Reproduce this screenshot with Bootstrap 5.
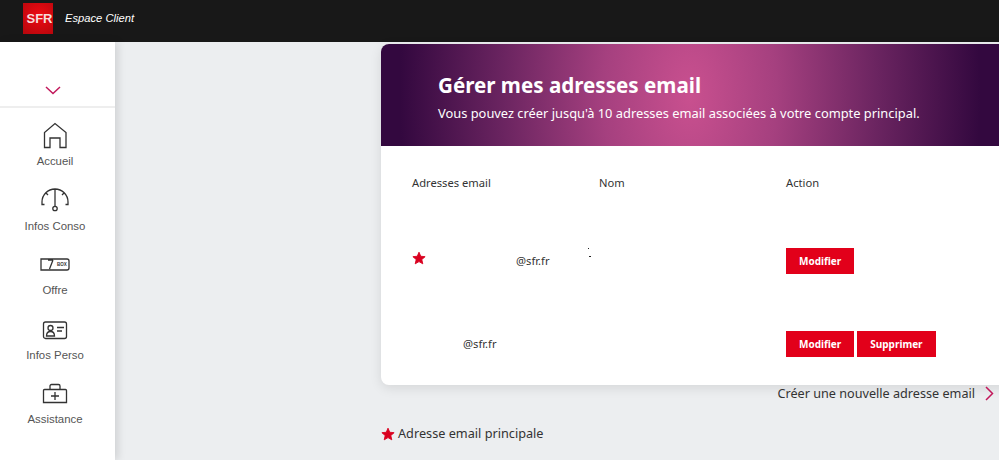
<!DOCTYPE html>
<html lang="fr">
  <head>
    <meta charset="UTF-8" />
    <title>Espace Client</title>
    <link href="https://cdn.jsdelivr.net/npm/bootstrap@5.3.0/dist/css/bootstrap.min.css" rel="stylesheet" />
    <style>
      body {
        background: #eceef0;
        height: 460px;
        overflow: hidden;
        font-family: "Noto Sans", "Liberation Sans", sans-serif;
        color: #333;
      }
      .top-bar {
        height: 42px;
        background: #181818;
        padding: 0 0 6px 23px;
      }
      .sfr-logo {
        width: 30px;
        height: 31px;
        padding-left: 3px;
        background: radial-gradient(circle at 55% 40%, #ee0a12, #b4060c);
        color: #f6dcdc;
        font: bold 13px "Liberation Sans", sans-serif;
      }
      .top-title {
        margin-left: 12px;
        font: italic 11.2px "Liberation Sans", sans-serif;
      }
      .page-body {
        height: 418px;
      }
      .side-menu {
        width: 115px;
        flex: none;
        box-shadow: 3px 0 8px rgba(0, 0, 0, 0.12);
        font: 11.4px/18px "Liberation Sans", sans-serif;
        color: #555;
      }
      .side-toggle {
        height: 66px;
        padding: 44px 9px 0 0;
        border-bottom: 2px solid #eee;
      }
      .side-list {
        padding-top: 14px;
      }
      .side-item {
        height: 64.5px;
        padding-right: 5px;
        color: #555;
        text-decoration: none;
      }
      .side-icon {
        height: 30px;
      }
      .side-icon svg {
        display: block;
      }
      .main-area {
        padding: 2px 0 0 266px;
        min-width: 0;
        flex: 1;
      }
      .mail-card {
        width: 660px;
        height: 341px;
        border-radius: 8px;
        overflow: hidden;
        box-shadow: 0 3px 12px rgba(0, 0, 0, 0.1);
      }
      .mail-hero {
        height: 102px;
        padding: 28px 0 0 57px;
        background: radial-gradient(ellipse 290px 500px at 309px 50%, #c9508f 0%, #a5407f 30%, #6a2460 65%, #33083f 100%);
      }
      .mail-hero h1 {
        font-size: 20.6px;
        font-weight: 700;
        line-height: 27px;
        margin: 0;
      }
      .mail-hero p {
        font-size: 12.87px;
        line-height: 18px;
        margin: 5px 0 0;
      }
      .mail-table {
        margin: 0;
        font-size: 11.2px;
        width: 100%;
        table-layout: fixed;
        --bs-table-color: #333;
      }
      .mail-table th,
      .mail-table td {
        padding: 0;
        font-weight: 400;
        vertical-align: middle;
        background: transparent;
      }
      .mail-table th:first-child,
      .mail-table td:first-child {
        padding-left: 31px;
        width: 218px;
      }
      .mail-table th:nth-child(2) {
        width: 187px;
      }
      .row-head {
        height: 75px;
      }
      .row-main {
        height: 80px;
      }
      .row-other {
        height: 86px;
      }
      .mail-star {
        width: 14px;
        height: 14px;
        fill: #d9001f;
        stroke: #d9001f;
        stroke-width: 1.5;
        stroke-linejoin: round;
        flex: none;
      }
      .star-main {
        margin-bottom: 6px;
      }
      .mail-first {
        width: 90px;
      }
      .mail-specks {
        width: 4px;
        height: 10px;
        margin: 0 8px 16px auto;
      }
      .mail-second {
        padding-left: 51px;
      }
      .btn-sfr {
        background: #e2001a;
        color: #fff;
        border: 0;
        border-radius: 0;
        font-size: 10px;
        font-weight: 700;
        height: 26px;
        line-height: 26px;
        padding: 0 13px;
      }
      .btn-gap {
        gap: 3px;
      }
      .create-row {
        width: 613px;
        height: 17px;
        font-size: 12.65px;
      }
      .create-row svg {
        margin-left: 10px;
      }
      .legend-row {
        margin-top: 22px;
        gap: 3px;
        font-size: 12.7px;
      }
    </style>
  </head>
  <body>
    <header class="top-bar d-flex align-items-center text-white">
      <div class="sfr-logo d-flex align-items-center justify-content-center">SFR</div>
      <div class="top-title">Espace Client</div>
    </header>

    <div class="page-body d-flex">
      <nav class="side-menu bg-white">
        <div class="side-toggle d-flex justify-content-center align-items-start">
          <svg width="16" height="9" viewBox="0 0 16 9" fill="none" stroke="#c2185b" stroke-width="1.5"><path d="M1 1l7 6.500L15 1" /></svg>
        </div>
        <div class="side-list">
          <a class="side-item d-flex flex-column align-items-center" href="#">
            <div class="side-icon">
              <svg width="26" height="27" viewBox="0 0 26 27" fill="none" stroke="#333" stroke-width="1.3"><path d="M2.500 25.500V10.500L13 1.500l11 9v15H18V16H8v9.500H2.500z" /></svg>
            </div>
            <div>Accueil</div>
          </a>
          <a class="side-item d-flex flex-column align-items-center" href="#">
            <div class="side-icon">
              <svg width="30" height="25" viewBox="0 0 30 25" fill="none" stroke="#333" stroke-width="1.3"><path d="M4.500 17.500H2V15a13 13 0 0 1 26 0v2.500h-2.500M15 2v17M6 6l2 2M24 6l-2 2" /><circle cx="15" cy="21.500" r="2.200" /></svg>
            </div>
            <div>Infos Conso</div>
          </a>
          <a class="side-item d-flex flex-column align-items-center" href="#">
            <div class="side-icon">
              <svg width="30" height="20" viewBox="0 0 30 20" fill="none" stroke="#333" stroke-width="1.3"><path d="M1 8h26a2 2 0 0 1 2 2v7a2 2 0 0 1-2 2H1zM13 9L9.500 18M8 9h5" /><text x="17" y="14.500" font-size="4.500" font-weight="700" font-family="Liberation Sans, sans-serif" fill="#333" stroke="none">BOX</text></svg>
            </div>
            <div>Offre</div>
          </a>
          <a class="side-item d-flex flex-column align-items-center" href="#">
            <div class="side-icon">
              <svg width="26" height="24" viewBox="0 0 26 24" fill="none" stroke="#333" stroke-width="1.3"><rect x="1.500" y="6" width="23" height="16.500" rx="2" /><circle cx="8.500" cy="12" r="2.500" /><path d="M4.500 20c0-3.500 1.500-4.500 4-4.500s4 1 4 4.500h-8zM15 11.500h7M15 15h5" /></svg>
            </div>
            <div>Infos Perso</div>
          </a>
          <a class="side-item d-flex flex-column align-items-center" href="#">
            <div class="side-icon">
              <svg width="26" height="24" viewBox="0 0 26 24" fill="none" stroke="#333" stroke-width="1.3"><path d="M2.500 9.500h21a1 1 0 0 1 1 1v12h-23v-12a1 1 0 0 1 1-1zM8 9.500V6A1.500 1.500 0 0 1 9.500 4.500h7A1.500 1.500 0 0 1 18 6v3.500M13 12v8M9 16h8" /></svg>
            </div>
            <div>Assistance</div>
          </a>
        </div>
      </nav>

      <main class="main-area">
        <section class="mail-card bg-white">
          <div class="mail-hero text-white">
            <h1>Gérer mes adresses email</h1>
            <p>Vous pouvez créer jusqu'à 10 adresses email associées à votre compte principal.</p>
          </div>
          <table class="table table-borderless mail-table">
            <thead>
              <tr class="row-head">
                <th>Adresses email</th>
                <th>Nom</th>
                <th>Action</th>
              </tr>
            </thead>
            <tbody>
              <tr class="row-main">
                <td>
                  <div class="d-flex align-items-center">
                    <svg class="mail-star star-main" viewBox="0 0 24 24"><path d="M12 2l3 7 7.500.7-5.700 5 1.700 7.300L12 18.200 5.500 22l1.700-7.300-5.700-5L9 9z" /></svg>
                    <span class="mail-first flex-shrink-0"></span>@sfr.fr
                    <svg class="mail-specks" viewBox="0 0 4 10"><path d="M1 0h1v1H1zM2 8h2v1H2z" fill="#222" /></svg>
                  </div>
                </td>
                <td></td>
                <td><button class="btn btn-sfr" type="button">Modifier</button></td>
              </tr>
              <tr class="row-other">
                <td><div class="mail-second">@sfr.fr</div></td>
                <td></td>
                <td>
                  <div class="d-flex btn-gap align-items-center">
                    <button class="btn btn-sfr" type="button">Modifier</button>
                    <button class="btn btn-sfr" type="button">Supprimer</button>
                  </div>
                </td>
              </tr>
            </tbody>
          </table>
        </section>
        <a class="create-row d-flex align-items-center justify-content-end text-decoration-none text-reset" href="#">
          Créer une nouvelle adresse email
          <svg width="9" height="15" viewBox="0 0 9 15" fill="none" stroke="#c2185b" stroke-width="1.5"><path d="M1 1l6.500 6.500L1 14" /></svg>
        </a>
        <div class="legend-row d-flex align-items-center">
          <svg class="mail-star" viewBox="0 0 24 24"><path d="M12 2l3 7 7.500.7-5.700 5 1.700 7.300L12 18.200 5.500 22l1.700-7.300-5.700-5L9 9z" /></svg>
          Adresse email principale
        </div>
      </main>
    </div>

    <script src="https://cdn.jsdelivr.net/npm/bootstrap@5.3.0/dist/js/bootstrap.bundle.min.js"></script>
  </body>
</html>
